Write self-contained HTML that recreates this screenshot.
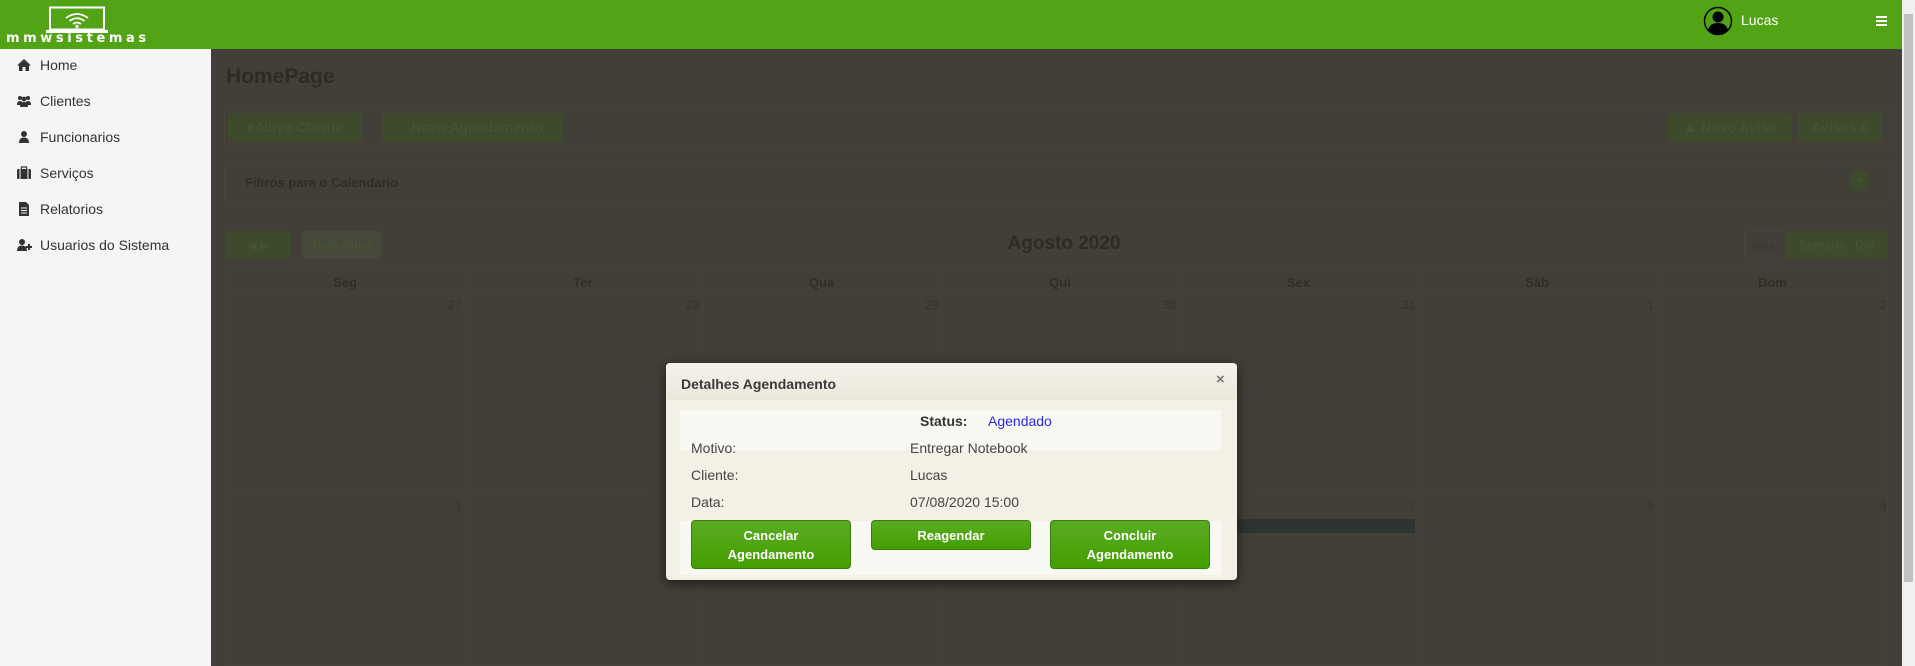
<!DOCTYPE html>
<html><head><meta charset="utf-8"><style>
*{box-sizing:border-box;margin:0;padding:0}
body{width:1915px;height:666px;overflow:hidden;font-family:"Liberation Sans",sans-serif;background:#423f38;position:relative}
.hdr{position:absolute;left:0;top:0;width:1902px;height:49px;background:#52a315}
.sb{position:absolute;left:0;top:49px;width:211px;height:617px;background:#f5f5f5}
.mi{position:absolute;left:40px;font-size:14px;color:#333;line-height:16px}
.ic{position:absolute;left:16px;width:16px;height:16px}
.scroll{position:absolute;left:1902px;top:0;width:13px;height:666px;background:#f0f0f0}
.thumb{position:absolute;left:1904px;top:14px;width:9px;height:568px;background:#c1c1c1}
.abs{position:absolute}
.dbtn{position:absolute;background:#3d4a2b;border-radius:3px;color:#48532f;font-weight:bold;font-size:14px;text-align:center}
.panel{position:absolute;border:1px solid #48443d;border-radius:4px}
.grid{position:absolute;left:225px;top:271px;width:1663px;height:395px;border:1px solid #46423b}
.col{position:absolute;top:0;bottom:0;border-left:1px solid #46423b}
.dh{position:absolute;top:0;height:22px;font-size:13px;font-weight:bold;color:#2f2d28;text-align:center;line-height:22px}
.dn{position:absolute;font-size:12px;color:#34322c}
.modal{position:absolute;left:666px;top:363px;width:571px;height:217px;background:#f3f0e5;border-radius:4px;box-shadow:0 3px 12px rgba(0,0,0,.6)}
.mt{position:absolute;left:15px;top:13px;font-size:14px;font-weight:bold;color:#3a3a3a}
.lbl{position:absolute;font-size:14px;color:#444}
.gb{position:absolute;background:linear-gradient(#5aab23,#449e00);border:1px solid #3b7e0b;border-radius:4px;color:#fff;font-weight:bold;font-size:13px;text-align:center;line-height:19px}
</style></head><body>
<div class="hdr">
<svg class="abs" style="left:44px;top:6px" width="66" height="30" viewBox="0 0 66 30"><rect x="6" y="1.5" width="54" height="22" fill="none" stroke="#fff" stroke-width="2"/><rect x="2" y="24" width="62" height="3" fill="#fff"/><path d="M22 12 Q33 4 44 12 M25.5 15 Q33 9.5 40.5 15 M29 18 Q33 15 37 18" fill="none" stroke="#fff" stroke-width="1.8"/><circle cx="33" cy="20.5" r="1.7" fill="#fff"/></svg>
<div class="abs" style="left:6px;top:32px;font-size:13px;font-weight:bold;color:#fff;letter-spacing:3.6px;line-height:14px;font-family:'DejaVu Sans',sans-serif">mmwsistemas</div>
<svg class="abs" style="left:1703px;top:6px" width="30" height="30" viewBox="0 0 30 30"><circle cx="15" cy="15" r="13.5" fill="#52a315" stroke="#000" stroke-width="1.5"/><circle cx="15" cy="11" r="5.5"/><path d="M5 25 Q6 17 15 17 Q24 17 25 25 Q15 31 5 25Z"/></svg>
<div class="abs" style="left:1741px;top:12px;font-size:14px;color:#fff">Lucas</div>
<div class="abs" style="left:1876px;top:16px;width:11px;height:2px;background:#fff;box-shadow:0 4px 0 #fff,0 8px 0 #fff"></div>
</div>
<div class="sb">
<svg class="ic" style="top:8px" viewBox="0 0 16 16"><path d="M8 2 L1 8.5 L3 8.5 L3 14 L6.5 14 L6.5 10 L9.5 10 L9.5 14 L13 14 L13 8.5 L15 8.5Z" fill="#333"/></svg><div class="mi" style="top:8px">Home</div>
<svg class="ic" style="top:44px" viewBox="0 0 16 16"><circle cx="4" cy="5" r="2" fill="#333"/><circle cx="12" cy="5" r="2" fill="#333"/><circle cx="8" cy="6" r="2.4" fill="#333"/><path d="M1 12 Q1 8 4 8 Q7 8 7 12Z M9 12 Q9 8 12 8 Q15 8 15 12Z M4 14 Q4 9 8 9 Q12 9 12 14Z" fill="#333"/></svg><div class="mi" style="top:44px">Clientes</div>
<svg class="ic" style="top:80px" viewBox="0 0 16 16"><circle cx="8" cy="5" r="3" fill="#333"/><path d="M3 14 Q3 8.5 8 8.5 Q13 8.5 13 14Z" fill="#333"/></svg><div class="mi" style="top:80px">Funcionarios</div>
<svg class="ic" style="top:116px" viewBox="0 0 16 16"><rect x="1" y="4" width="14" height="10" rx="1" fill="#333"/><rect x="5.5" y="2" width="5" height="3" fill="none" stroke="#333" stroke-width="1.2"/><rect x="3.5" y="4" width="1" height="10" fill="#f5f5f5"/><rect x="11.5" y="4" width="1" height="10" fill="#f5f5f5"/></svg><div class="mi" style="top:116px">Serviços</div>
<svg class="ic" style="top:152px" viewBox="0 0 16 16"><path d="M3 1 L10 1 L13 4 L13 15 L3 15Z" fill="#333"/><path d="M5 7h6M5 9.5h6M5 12h6" stroke="#f5f5f5" stroke-width="1"/></svg><div class="mi" style="top:152px">Relatorios</div>
<svg class="ic" style="top:188px" viewBox="0 0 16 16"><circle cx="6" cy="5" r="3" fill="#333"/><path d="M1 14 Q1 8.5 6 8.5 Q11 8.5 11 14Z" fill="#333"/><path d="M10 10h6M13 7v6" stroke="#333" stroke-width="2"/></svg><div class="mi" style="top:188px">Usuarios do Sistema</div>
</div>
<div class="abs" style="left:226px;top:65px;font-size:21px;font-weight:bold;color:#2d2b26">HomePage</div>
<div class="panel" style="left:224px;top:109px;width:1667px;height:39px"></div>
<div class="dbtn" style="left:228px;top:113px;width:134px;height:29px;line-height:29px">▾ Novo Cliente</div>
<div class="dbtn" style="left:382px;top:113px;width:181px;height:29px;line-height:29px">▫ Novo Agendamento</div>
<div class="dbtn" style="left:1668px;top:113px;width:124px;height:29px;line-height:29px">&#9650; Novo Aviso</div>
<div class="dbtn" style="left:1798px;top:113px;width:84px;height:29px;line-height:29px">Avisos 0</div>
<div class="panel" style="left:224px;top:161px;width:1667px;height:41px"></div>
<div class="abs" style="left:245px;top:175px;font-size:13px;font-weight:bold;color:#2f2d28">Filtros para o Calendario</div>
<div class="dbtn" style="left:1851px;top:171px;width:17px;height:19px;line-height:19px">+</div>
<div class="dbtn" style="left:225px;top:231px;width:66px;height:28px;line-height:28px">◂ ▸</div>
<div class="dbtn" style="left:302px;top:231px;width:80px;height:28px;line-height:28px;background:#45483a;font-size:12px">Data Atual</div>
<div class="abs" style="left:964px;top:233px;width:200px;text-align:center;font-size:19px;font-weight:bold;color:#2d2b26">Agosto 2020</div>
<div class="panel" style="left:1744px;top:231px;width:144px;height:28px"></div>
<div class="dbtn" style="left:1785px;top:231px;width:103px;height:28px;line-height:28px;font-size:12px;border-radius:0 3px 3px 0">Semana &nbsp; Dia</div>
<div class="abs" style="left:1752px;top:239px;font-size:12px;font-weight:bold;color:#3a3a30">Mês</div>
<div class="grid">
<div class="abs" style="left:0;right:0;top:22px;border-top:1px solid #46423b"></div>
<div class="abs" style="left:0;right:0;top:223px;border-top:1px solid #46423b"></div>
<div class="col" style="left:238px"></div><div class="col" style="left:476px"></div><div class="col" style="left:715px"></div><div class="col" style="left:953px"></div><div class="col" style="left:1192px"></div><div class="col" style="left:1430px"></div>
<div class="dh" style="left:0;width:238px">Seg</div><div class="dh" style="left:238px;width:238px">Ter</div><div class="dh" style="left:476px;width:239px">Qua</div><div class="dh" style="left:715px;width:238px">Qui</div><div class="dh" style="left:953px;width:239px">Sex</div><div class="dh" style="left:1192px;width:238px">Sáb</div><div class="dh" style="left:1430px;width:233px">Dom</div>
<div class="dn" style="left:222px;top:26px">27</div><div class="dn" style="left:460px;top:26px">28</div><div class="dn" style="left:699px;top:26px">29</div><div class="dn" style="left:937px;top:26px">30</div><div class="dn" style="left:1176px;top:26px">31</div><div class="dn" style="left:1421px;top:26px">1</div><div class="dn" style="left:1654px;top:26px">2</div>
<div class="dn" style="left:228px;top:227px">3</div><div class="dn" style="left:1183px;top:227px">7</div><div class="dn" style="left:1421px;top:227px">8</div><div class="dn" style="left:1654px;top:227px">9</div>
<div class="abs" style="left:953px;top:247px;width:236px;height:14px;background:#2d3431;border-radius:2px"></div>
</div>
<div class="modal">
<div class="abs" style="left:0;top:0;right:0;height:37px;background:linear-gradient(#f5f2ea,#ece8dc);border-radius:4px 4px 0 0"></div>
<div class="mt">Detalhes Agendamento</div>
<div class="abs" style="left:550px;top:8px;font-size:15px;font-weight:bold;color:#777">×</div>
<div class="abs" style="left:14px;top:47px;width:541px;height:40px;background:#f9f9f4"></div>
<div class="abs" style="left:14px;top:158px;width:541px;height:54px;background:#f9f9f4"></div>
<div class="lbl" style="left:254px;top:50px;font-weight:bold;color:#333">Status:</div>
<div class="lbl" style="left:322px;top:50px;color:#2727ee">Agendado</div>
<div class="lbl" style="left:25px;top:77px">Motivo:</div><div class="lbl" style="left:244px;top:77px">Entregar Notebook</div>
<div class="lbl" style="left:25px;top:104px">Cliente:</div><div class="lbl" style="left:244px;top:104px">Lucas</div>
<div class="lbl" style="left:25px;top:131px">Data:</div><div class="lbl" style="left:244px;top:131px">07/08/2020 15:00</div>
<div class="gb" style="left:25px;top:157px;width:160px;height:49px;padding-top:5px">Cancelar<br>Agendamento</div>
<div class="gb" style="left:205px;top:157px;width:160px;height:30px;padding-top:5px">Reagendar</div>
<div class="gb" style="left:384px;top:157px;width:160px;height:49px;padding-top:5px">Concluir<br>Agendamento</div>
</div>
<div class="scroll"></div><div class="thumb"></div>
</body></html>
